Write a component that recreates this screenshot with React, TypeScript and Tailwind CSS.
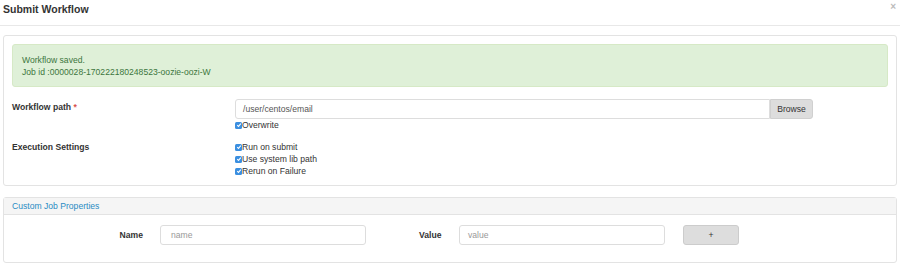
import React from "react";

// small blue checked box
const Check = () => (
  <span className="inline-flex items-center justify-center w-[7px] h-[7px] rounded-[1.5px] bg-[#3b8fe0] shrink-0">
    <svg width="6" height="6" viewBox="0 0 10 10">
      <path d="M2 5.2 L4.2 7.3 L8 2.8" stroke="white" strokeWidth="1.8" fill="none" />
    </svg>
  </span>
);

const CheckRow = ({ label }: { label: string }) => (
  <div className="flex items-center h-[12px] text-[8.6px] text-[#333]">
    <Check />
    <span>{label}</span>
  </div>
);

const App = () => {
  return (
    <div className="w-[900px] h-[268px] bg-white font-['Liberation_Sans',Arial,sans-serif] overflow-hidden">
      {/* Header */}
      <div className="flex items-start justify-between h-[26px] border-b border-[#e8e8e8] pl-[3px] pr-[4px]">
        <h1 className="text-[10.5px] font-bold text-[#333] mt-[2px]">Submit Workflow</h1>
        <span className="text-[10px] leading-[10px] text-[#bbb] font-bold mt-[2px]">×</span>
      </div>

      {/* Workflow panel */}
      <div className="mx-[3px] mt-[9px] border border-[#e3e3e3] rounded-[3px] px-[8px] pt-[8px] pb-[8px]">
        <div className="h-[43px] bg-[#dff0d8] border border-[#d6e9c6] rounded-[3px] pl-[9px] pt-[9px] text-[8.6px] leading-[12px] text-[#3c763d]">
          <div>Workflow saved.</div>
          <div>Job id :0000028-170222180248523-oozie-oozi-W</div>
        </div>

        <div className="flex mt-[12px]">
          <div className="w-[223px] pt-[2px] text-[8.6px] font-bold text-[#333] leading-[12px]">
            Workflow path <span className="text-[#d9534f]">*</span>
          </div>
          <div className="flex flex-col">
            <div className="flex">
              <div className="w-[535px] h-[20px] border border-[#ddd] rounded-l-[3px] flex items-center pl-[7px] text-[8.6px] text-[#555]">
                /user/centos/email
              </div>
              <button className="w-[43px] h-[20px] bg-[#ddd] border border-[#d0d0d0] rounded-r-[3px] text-[8.6px] text-[#333]">
                Browse
              </button>
            </div>
            <CheckRow label="Overwrite" />
          </div>
        </div>

        <div className="flex mt-[10px]">
          <div className="w-[223px] text-[8.6px] font-bold text-[#333] leading-[12px]">Execution Settings</div>
          <div className="flex flex-col">
            <CheckRow label="Run on submit" />
            <CheckRow label="Use system lib path" />
            <CheckRow label="Rerun on Failure" />
          </div>
        </div>
      </div>

      {/* Custom job properties panel */}
      <div className="mx-[3px] mt-[11px] border border-[#e3e3e3] rounded-[3px]">
        <div className="h-[17px] bg-[#f5f5f5] border-b border-[#e3e3e3] flex items-center pl-[8px] text-[8.6px] text-[#2a8cc4]">
          Custom Job Properties
        </div>
        <div className="flex items-center pt-[10px] pb-[17px]">
          <div className="w-[139px] text-right text-[8.6px] font-bold text-[#333]">Name</div>
          <div className="ml-[17px] w-[206px] h-[20px] border border-[#ddd] rounded-[3px] flex items-center pl-[10px] text-[8.6px] text-[#999]">
            name
          </div>
          <div className="ml-[53px] w-[40px] text-[8.6px] font-bold text-[#333]">Value</div>
          <div className="w-[206px] h-[20px] border border-[#ddd] rounded-[3px] flex items-center pl-[8px] text-[8.6px] text-[#999]">
            value
          </div>
          <button className="ml-[18px] w-[56px] h-[20px] bg-[#ddd] border border-[#ccc] rounded-[3px] text-[8.6px] text-[#333]">
            +
          </button>
        </div>
      </div>
    </div>
  );
};

export default App;
